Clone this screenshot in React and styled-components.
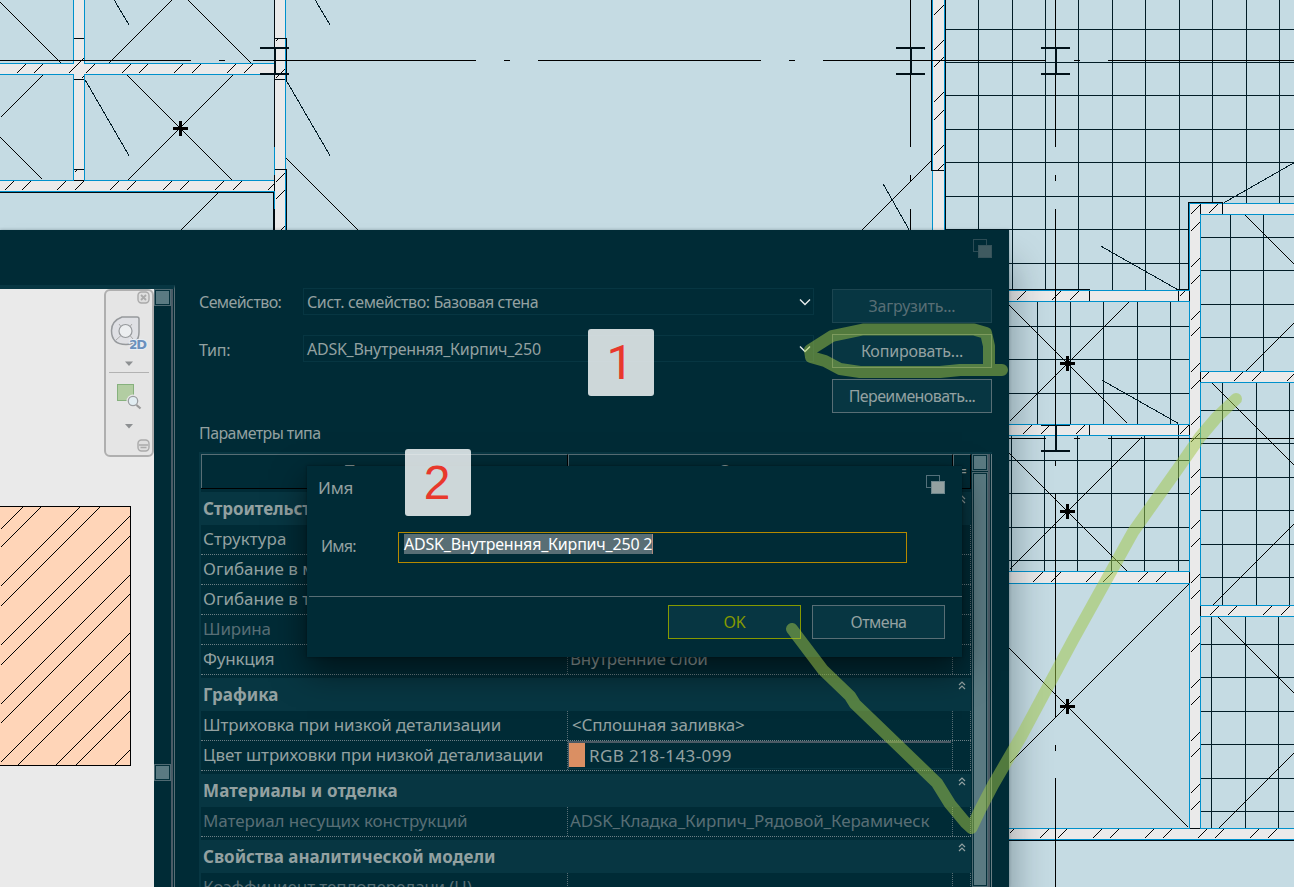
import React from "react";
import styled, { createGlobalStyle } from "styled-components";

const GlobalStyle = createGlobalStyle`
  * { box-sizing: border-box; }
  body { margin: 0; overflow: hidden; }
`;

const c = {
  base: "#002b36",
  panel: "#073642",
  line: "#586e75",
  text: "#93a1a1",
  dim: "#586e75",
  blue: "#0091cc",
  ink: "#021c26",
};

/* ---------- floor plan drawing ---------- */

const hs = (list) => list.map(([y, a, b]) => `M${a} ${y + 0.5}H${b}`).join("");
const vs = (list) => list.map(([x, a, b]) => `M${x + 0.5} ${a}V${b}`).join("");
const ds = (list) => list.map(([a, b, x, y]) => `M${a + 0.5} ${b + 0.5}L${x + 0.5} ${y + 0.5}`).join("");
const fill = (list) => list.map(([x, y, r, b]) => `M${x} ${y}H${r}V${b}H${x}Z`).join("");
const grid = (xs, ys, x1, y1, x2, y2) => vs(xs.map((x) => [x, y1, y2])) + hs(ys.map((y) => [y, x1, x2]));
const rising = (xs, bottom, size = 10) => ds(xs.map((x) => [x, bottom, x + size, bottom - size]));
const risingV = (ys, x) => ds(ys.map((y) => [x, y, x + 10, y - 10]));
const cross = (x, y) => fill([[x - 7, y - 1, x + 8, y + 2], [x - 1, y - 7, x + 2, y + 8]]);
const beam = (x, y) => fill([[x, y, x + 29, y + 2], [x, y + 26, x + 29, y + 28], [x + 14, y + 2, x + 16, y + 26]]);

const walls = fill([
  [74, 0, 84, 180], [0, 64, 275, 74], [275, 0, 285, 230], [0, 181, 275, 191],
  [933, 0, 944, 230], [1190, 204, 1200, 829], [1190, 204, 1294, 214],
  [1009, 291, 1190, 301], [1009, 425, 1190, 435], [1009, 572, 1190, 583],
  [1009, 829, 1294, 839], [1200, 372, 1294, 382], [1200, 606, 1294, 616],
]);

const wallEdges =
  hs([
    [63, 0, 74], [63, 84, 274], [74, 0, 74], [74, 84, 274], [180, 0, 274], [191, 0, 274],
    [203, 1189, 1294], [214, 1200, 1294], [290, 1009, 1189], [301, 1009, 1189],
    [424, 1009, 1189], [435, 1009, 1189], [571, 1009, 1189], [583, 1009, 1189],
    [828, 1009, 1189], [828, 1200, 1294], [839, 1009, 1294],
    [371, 1200, 1294], [382, 1200, 1294], [605, 1200, 1294], [616, 1200, 1294],
  ]) +
  vs([
    [73, 0, 64], [84, 0, 64], [73, 74, 181], [84, 74, 181], [285, 0, 230], [274, 147, 175], [274, 191, 209],
    [932, 0, 230], [944, 0, 230], [1189, 203, 829], [1200, 214, 372], [1200, 382, 606], [1200, 616, 829],
  ]);

const outlines =
  hs([
    [38, 74, 84], [79, 74, 84], [169, 74, 84], [180, 74, 84], [38, 275, 287], [79, 275, 285], [169, 275, 287],
    [192, 0, 274], [170, 931, 944], [202, 1188, 1223], [289, 1009, 1090], [289, 1176, 1189],
    [840, 1009, 1294], [828, 1190, 1200],
  ]) +
  vs([
    [274, 0, 147], [274, 175, 191], [273, 192, 230], [274, 209, 230], [286, 38, 82], [286, 169, 230],
    [931, 0, 171], [945, 0, 230], [1188, 202, 290], [1222, 203, 214], [1200, 204, 214],
    [1089, 291, 301], [1178, 291, 301], [1089, 425, 435], [1178, 425, 435],
    [1189, 291, 301], [1189, 425, 435], [1189, 572, 583], [1200, 372, 382], [1200, 606, 616],
  ]);

const hatch =
  rising([16, 33, 121, 138, 173, 191, 226, 243, 85], 73, 9) +
  ds([[68, 73, 83, 58], [81, 78, 84, 75]]) +
  rising([4, 21, 56, 74, 109, 126, 162, 179, 214, 232], 190, 9) +
  ds([[267, 190, 274, 183], [74, 172, 76, 170], [275, 41, 277, 39], [280, 73, 284, 69], [275, 78, 279, 74], [280, 230, 285, 225]]) +
  ds([[275, 182, 284, 173], [275, 199, 284, 190], [937, 170, 943, 164]]) +
  risingV([15, 50, 67, 102, 120, 155], 933) +
  ds([214, 231, 267, 284, 320, 336, 372, 389, 425, 442, 478, 495, 529, 547, 583, 599, 635, 652, 688, 705, 741, 757, 793, 810]
    .map((y) => [1190, y, 1199, y - 9])) +
  rising([1208], 213, 9) + rising([1016, 1051, 1069], 300, 9) + ds([[1179, 296, 1184, 291]]) +
  rising([1022, 1040, 1075, 1179], 434, 9) + rising([1032, 1050, 1085, 1102, 1137, 1155], 582) +
  rising([1039, 1057, 1092, 1109, 1144, 1162, 1197, 1214, 1249, 1267], 838, 9) + ds([[1009, 833, 1013, 829]]) +
  ds([[1201, 379, 1208, 372]]) + rising([1233, 1251, 1286], 381, 9) + rising([1209, 1227, 1262, 1280], 615, 9);

const tiles =
  grid([978, 1012, 1045, 1078, 1112, 1145, 1179], [229], 945, 0, 1188, 230) +
  grid([1212, 1246, 1279], [29, 62, 95, 129, 162, 196], 945, 0, 1294, 203) +
  grid([1012, 1045, 1078, 1112, 1145, 1179], [263], 1009, 230, 1188, 290) +
  grid([1037, 1070, 1103, 1137, 1170], [326, 359, 393], 1009, 302, 1189, 424) +
  grid([1011, 1044, 1077, 1111, 1144, 1178], [460, 493, 527, 560], 1009, 436, 1189, 571) +
  grid([1230, 1263], [237, 270, 304, 337], 1201, 215, 1294, 371) +
  grid([1222, 1256, 1289], [410, 443, 477, 510, 544, 577], 1201, 383, 1294, 605) +
  grid([1211, 1245, 1278], [644, 677, 711, 744, 778, 811], 1201, 617, 1294, 828);

const axes =
  hs([
    [60, 0, 191], [60, 219, 225], [60, 253, 476], [60, 504, 510], [60, 538, 761], [60, 789, 795],
    [60, 823, 1046], [60, 1074, 1080], [60, 1108, 1294], [438, 1009, 1046], [438, 1074, 1080], [438, 1108, 1294],
  ]) +
  vs([
    [910, 0, 147], [910, 175, 181], [910, 209, 230], [1055, 0, 147], [1055, 175, 181], [1055, 209, 432],
    [1055, 461, 466], [1055, 494, 718], [1055, 745, 751], [1055, 778, 887],
  ]);

const diagonals = ds([
  [0, 2, 61, 63], [171, 0, 108, 63], [188, 0, 251, 63], [0, 117, 42, 75], [0, 137, 42, 179],
  [127, 75, 232, 180], [232, 75, 127, 180], [286, 158, 358, 230], [218, 192, 180, 230], [932, 159, 861, 230],
  [1009, 305, 1127, 423], [1128, 302, 1009, 421], [1009, 453, 1127, 571], [1141, 437, 1009, 569],
  [1188, 584, 1009, 763], [1009, 648, 1188, 827], [1245, 215, 1294, 264], [1245, 371, 1294, 322],
  [1212, 383, 1294, 465], [1212, 605, 1294, 523], [1218, 617, 1294, 693], [1218, 828, 1294, 752],
]);

const swings = ds([
  [114, 0, 129, 25], [315, 0, 330, 25], [85, 80, 129, 156], [287, 82, 330, 156], [883, 184, 909, 230],
  [1224, 202, 1294, 162], [1101, 246, 1177, 289], [1102, 380, 1178, 423],
]);

const PlanSvg = styled.svg`
  position: absolute;
  inset: 0;
  display: block;
  shape-rendering: crispEdges;
`;

const Plan = () => (
  <PlanSvg width="1294" height="887" fill="none">
    <path d={tiles} stroke={c.ink} />
    <path d={walls} fill="#eaeaea" />
    <path d={diagonals} stroke="#000" />
    <path d={swings} stroke={c.ink} />
    <path d={hatch} stroke="#000" />
    <path d={wallEdges} stroke={c.blue} />
    <path d={outlines} stroke="#000a10" />
    <path d={axes} stroke="#000" />
    <path d={beam(260, 47) + beam(896, 47) + beam(1041, 47)} fill="#001018" />
    <path d={fill([[1041, 425, 1070, 426], [1041, 450, 1070, 452], [1055, 426, 1057, 450]])} fill="#001018" />
    <path d={cross(180, 128) + cross(1067, 363) + cross(1067, 511) + cross(1067, 706)} fill="#000" />
  </PlanSvg>
);

/* ---------- windows ---------- */

const Screen = styled.div`
  position: relative;
  width: 1294px;
  height: 887px;
  overflow: hidden;
  background: #c5dbe3;
  font-family: "Noto Sans", "Open Sans", sans-serif;
  color: ${c.text};
`;

const Window = styled.section`
  position: absolute;
  left: 0;
  top: 230px;
  width: 1009px;
  height: 657px;
  display: flex;
  flex-direction: column;
  background: ${c.base};
  box-shadow: 4px 34px 34px rgba(0, 20, 30, 0.34), 0 0 3px rgba(0, 20, 30, 0.3);
`;

const TitleBar = styled.header`
  height: ${(p) => p.$h}px;
  flex: none;
  display: flex;
  justify-content: ${(p) => (p.$end ? "flex-end" : "space-between")};
  padding: ${(p) => p.$pad};
  font-size: 17px;
  line-height: 26px;
  letter-spacing: -0.2px;
`;

const WindowIcon = ({ dim }) => (
  <svg width="19" height="19" shapeRendering="crispEdges" fill="none">
    <rect x="0.5" y="0.5" width="13" height="12" stroke={dim ? "#2c4c55" : "#54707a"} />
    <rect x="5.5" y="6.5" width="13" height="12" fill={dim ? "#3f5a60" : "#93a1a1"} stroke={dim ? "#365259" : "#6d868c"} />
  </svg>
);

const Body = styled.div`
  flex: 1;
  min-height: 0;
  display: flex;
`;

const Preview = styled.aside`
  width: 175px;
  flex: none;
  display: flex;
  border-top: 4px solid ${c.panel};
  border-right: 1px solid ${c.line};
`;

const Sheet = styled.div`
  width: 154px;
  flex: none;
  display: flex;
  flex-direction: column;
  background: #eaeaea;
`;

const Sample = styled.svg`
  display: block;
  margin-top: 49px;
  shape-rendering: crispEdges;
`;

const NavBar = styled.div`
  align-self: flex-end;
  width: 50px;
  height: 168px;
  flex: none;
  border: 2px solid #afafaf;
  border-radius: 6px;
  background: #e5e5e5;
  svg { display: block; margin: -2px; }
`;

const PreviewScroll = styled.div`
  width: 18px;
  display: flex;
  flex-direction: column;
  justify-content: space-between;
  height: 492px;
`;

const Double = styled.div`
  width: 2px;
  background: #4a5b66;
  margin-right: 1px;
`;

const Stub = styled.div`
  width: ${(p) => p.$w || 17}px;
  height: 17px;
  flex: ${(p) => (p.$grow ? 1 : "none")};
  border: 1px solid #4f6a72;
  background: #5a7a82;
  box-shadow: inset 0 0 0 1px #05303b;
`;

const Form = styled.div`
  flex: 1;
  padding-left: 24px;
  display: flex;
  flex-direction: column;
`;

const FormTop = styled.div`
  display: flex;
  height: 120px;
  flex: none;
`;

const Fields = styled.div`
  display: flex;
  flex-direction: column;
  gap: 20px;
  padding-top: 3px;
`;

const Field = styled.div`
  display: flex;
  height: 27px;
  align-items: center;
  font-size: 16px;
`;

const FieldLabel = styled.span`
  width: 104px;
  letter-spacing: ${(p) => p.$ls || "-0.3px"};
  padding-top: ${(p) => p.$drop || 0}px;
`;

const Combo = styled.div`
  width: 511px;
  height: 27px;
  padding: 0 2px 0 3px;
  display: flex;
  align-items: center;
  justify-content: space-between;
  border: 1px solid ${c.panel};
  letter-spacing: ${(p) => p.$ls};
  line-height: 24px;
`;

const Buttons = styled.div`
  margin-left: 18px;
  padding-top: 4px;
  display: flex;
  flex-direction: column;
  gap: 11px;
`;

const Button = styled.button`
  width: ${(p) => p.$w}px;
  height: 34px;
  flex: none;
  padding: 0;
  border: 1px solid ${(p) => (p.$tone === "off" ? "#1c4550" : p.$tone === "ok" ? "#859900" : c.line)};
  background: ${c.panel};
  color: ${(p) => (p.$tone === "off" ? c.dim : p.$tone === "ok" ? "#859900" : c.text)};
  font: 16px "Noto Sans", "Open Sans", sans-serif;
  letter-spacing: ${(p) => p.$ls || "-0.2px"};
`;

const SectionLabel = styled.div`
  height: 47px;
  flex: none;
  padding-top: 16px;
  font-size: 16px;
  line-height: 24px;
  letter-spacing: -0.58px;
`;

const Chevron = () => (
  <svg width="12" height="8" fill="none" stroke="#e6ecec" strokeWidth="1.4"><path d="M1 1.5L6 6.5L11 1.5" /></svg>
);

/* ---------- parameter table ---------- */

const TableFrame = styled.div`
  display: flex;
  width: 793px;
  height: 435px;
  overflow: hidden;
  border-left: 2px solid ${c.panel};
  border-top: 2px solid ${c.panel};
`;

const Table = styled.div`
  width: 771px;
  flex: none;
  padding-right: 1px;
`;

const HeaderRow = styled.div`
  display: grid;
  grid-template-columns: 367px 385px 18px;
  height: 35px;
  margin-bottom: 3px;
  border-bottom: 1px solid #000;
`;

const HeaderCell = styled.div`
  border-left: 1px solid ${c.line};
  border-top: 1px solid ${c.line};
  border-right: 1px solid #000;
  text-align: center;
  font-size: 17px;
  line-height: 31px;
`;

const Group = styled.div`
  height: 33px;
  margin-top: ${(p) => (p.$first ? 0 : 3)}px;
  padding: 0 4px 0 2px;
  display: flex;
  justify-content: space-between;
  background: ${c.panel};
  font-size: 17px;
  font-weight: 700;
  line-height: 34px;
  letter-spacing: ${(p) => p.$ls};
  svg { margin-top: 2px; }
`;

const Row = styled.div`
  display: grid;
  grid-template-columns: 367px 385px 18px;
  height: 30px;
  border-bottom: 1px dotted #6b7f85;
  font-size: 17px;
  line-height: 28px;
  color: ${(p) => (p.$dim ? c.dim : c.text)};
`;

const Cell = styled.div`
  padding-left: ${(p) => p.$pad ?? 2}px;
  border-right: 1px dotted ${c.line};
  white-space: nowrap;
  overflow: hidden;
  display: flex;
  letter-spacing: ${(p) => p.$ls || 0};
`;

const ColorBox = styled.div`
  display: flex;
  gap: 4px;
  width: 383px;
  height: 28px;
  border-top: 2px solid #4a5964;
  border-left: 1px solid #4a5964;
  border-bottom: 1px solid ${c.panel};
  line-height: 25px;
  &::before { content: ""; width: 16px; height: 24px; background: #da8f63; }
`;

const TableScroll = styled.div`
  width: 16px;
  flex: none;
  display: flex;
  flex-direction: column;
  gap: 1px;
`;

const TableEdge = styled.div`
  width: 4px;
  border-left: 2px solid #4a5964;
  border-right: 1px solid #6b7f85;
`;

const Collapse = () => (
  <svg width="10" height="11" fill="none" stroke={c.text} strokeWidth="1.2"><path d="M2 5L5 2L8 5M2 9L5 6L8 9" /></svg>
);

const groups = [
  { name: "Строительство", ls: "-0.1px", rows: [
    { label: "Структура", ls: "0.1px" },
    { label: "Огибание в местах вставки" },
    { label: "Огибание в торцах стен" },
    { label: "Ширина", dim: true, ls: "-0.2px" },
    { label: "Функция", value: "Внутренние слои", ls: "-0.2px", vls: "-0.3px" },
  ] },
  { name: "Графика", rows: [
    { label: "Штриховка при низкой детализации", value: "<Сплошная заливка>", ls: "-0.13px", vls: "-0.2px", pad: 4 },
    { label: "Цвет штриховки при низкой детализации", value: "RGB 218-143-099", ls: "-0.13px", vls: "0.4px", pad: 0, swatch: true },
  ] },
  { name: "Материалы и отделка", ls: "0.15px", rows: [
    { label: "Материал несущих конструкций", value: "ADSK_Кладка_Кирпич_Рядовой_Керамическ", dim: true, ls: "-0.08px", vls: "-0.14px" },
  ] },
  { name: "Свойства аналитической модели", rows: [
    { label: "Коэффициент теплопередачи (U)", dim: true, ls: "-0.1px" },
  ] },
];

const ParameterTable = () => (
  <TableFrame>
    <Table>
      <HeaderRow>
        <HeaderCell>Параметр</HeaderCell>
        <HeaderCell>Значение</HeaderCell>
        <HeaderCell>=</HeaderCell>
      </HeaderRow>
      {groups.map((group, i) => (
        <React.Fragment key={group.name}>
          <Group $first={i === 0} $ls={group.ls || "0"}>{group.name}<Collapse /></Group>
          {group.rows.map((row) => (
            <Row key={row.label} $dim={row.dim}>
              <Cell $ls={row.ls}>{row.label}</Cell>
              <Cell $pad={row.pad ?? 2} $ls={row.vls}>
                {row.swatch ? <ColorBox>{row.value}</ColorBox> : row.value}
              </Cell>
              <Cell />
            </Row>
          ))}
        </React.Fragment>
      ))}
    </Table>
    <TableScroll>
      <Stub $w={16} />
      <Stub $w={16} $grow />
    </TableScroll>
    <TableEdge />
  </TableFrame>
);

/* ---------- name prompt ---------- */

const Prompt = styled.section`
  position: absolute;
  left: 307px;
  top: 466px;
  width: 655px;
  height: 191px;
  display: flex;
  flex-direction: column;
  background: ${c.base};
  box-shadow: 0 14px 32px rgba(0, 0, 0, 0.55), 0 0 3px rgba(0, 0, 0, 0.4);
`;

const PromptBody = styled.div`
  height: 86px;
  flex: none;
  padding: 22px 0 0 14px;
  display: flex;
  font-size: 16px;
`;

const PromptLabel = styled.label`
  width: 77px;
  padding-top: 3px;
  letter-spacing: -0.8px;
`;

const Input = styled.div`
  width: 509px;
  height: 31px;
  padding: 1px 0 0 5px;
  border: 1px solid #b58900;
  color: #fff;
  line-height: 20px;
  span {
    display: inline-block;
    height: 20px;
    background: ${c.line};
    border-right: 1px solid #b08a80;
    letter-spacing: -0.2px;
    white-space: nowrap;
  }
`;

const PromptActions = styled.footer`
  margin-left: 2px;
  border-top: 1px solid ${c.line};
  padding: 8px 17px 0 0;
  display: flex;
  justify-content: flex-end;
  gap: 11px;
`;

const Badge = styled.div`
  position: absolute;
  left: ${(p) => p.$x}px;
  top: ${(p) => p.$y}px;
  width: 66px;
  height: 67px;
  border-radius: 3px;
  background: rgba(239, 243, 244, 0.86);
  color: #e8382c;
  font-family: ${(p) => p.$font || '"Liberation Sans"'}, sans-serif;
  font-size: 48px;
  line-height: 67px;
  text-align: center;
  padding-right: 2px;
`;

const Marker = styled.svg`
  position: absolute;
  inset: 0;
`;

const sampleLines = [529, 547, 586, 606, 645, 665, 704, 723, 762, 782, 820, 840, 879]
  .map((k) => k - 506)
  .map((k) => (k <= 259 ? `M0.5 ${k + 0.5}L${k + 0.5} 0.5` : `M${k - 259 + 0.5} 259.5L${k + 0.5} 0.5`))
  .join("");

const NavIcons = () => (
  <svg width="50" height="168" fill="none">
    <rect x="34" y="3" width="11" height="11" rx="3.5" fill="#dedede" stroke="#aaa" strokeWidth="1.4" />
    <path d="M37 6L42 11M42 6L37 11" stroke="#aaa" strokeWidth="1.8" />
    <path d="M18 28H33Q35 28 35 30V43Q35 55.5 22 55.5Q7.500 55.5 7.500 41.500Q7.500 32 18 28Z" fill="#dfe0e4" stroke="#96999c" strokeWidth="1.5" />
    <circle cx="21.500" cy="42" r="6.500" fill="#eceef0" stroke="#96999c" strokeWidth="1.200" />
    <path d="M12 51L17 46.500M26 46.500L29 50M17 37.500L15 35M26 37.500L28 35" stroke="#aaa" />
    <text x="25" y="60" fill="#6a90bd" stroke="#e8edf3" strokeWidth="2" paintOrder="stroke" fontFamily="DejaVu Sans, sans-serif" fontWeight="700" fontSize="13" textLength="18">2D</text>
    <path d="M21 72.500H29L25 77Z" fill="#8d9092" />
    <path d="M5 83.500H45" stroke="#b2b2b2" />
    <rect x="13.500" y="95.500" width="16" height="16" fill="#b2cda2" stroke="#86b17d" />
    <circle cx="29" cy="112" r="6.500" fill="#e8e8e8" />
    <path d="M32.500 116L36.500 119.500" stroke="#999" strokeWidth="2.200" />
    <circle cx="29" cy="112" r="4.700" fill="#e2edf2" stroke="#9a9da0" strokeWidth="1.300" />
    <path d="M21 135H29L25 139.500Z" fill="#8d9092" />
    <rect x="34" y="151" width="11" height="11" rx="3.500" fill="#dedede" stroke="#aaa" strokeWidth="1.400" />
    <path d="M35 156H44M36.500 158.500H42.500" stroke="#aaa" strokeWidth="1.400" />
  </svg>
);

export default function App() {
  return (
    <Screen>
      <GlobalStyle />
      <Plan />
      <Window>
        <TitleBar $h={55} $pad="9px 17px 0 0" $end><WindowIcon dim /></TitleBar>
        <Body>
          <Preview>
            <Sheet>
              <NavBar><NavIcons /></NavBar>
              <Sample width="131" height="260" fill="none">
                <rect width="131" height="260" fill="#ffd5b8" />
                <path d={sampleLines} stroke="#000" />
                <path d="M0 0.5H130.500V259.500H0" stroke="#000" />
              </Sample>
            </Sheet>
            <PreviewScroll><Stub /><Stub /></PreviewScroll>
            <Double />
          </Preview>
          <Form>
            <FormTop>
              <Fields>
                <Field><FieldLabel $ls="-0.6px">Семейство:</FieldLabel><Combo $ls="-0.4px">Сист. семейство: Базовая стена<Chevron /></Combo></Field>
                <Field><FieldLabel $drop={2}>Тип:</FieldLabel><Combo $ls="-0.26px">ADSK_Внутренняя_Кирпич_250<Chevron /></Combo></Field>
              </Fields>
              <Buttons>
                <Button $w={160} $tone="off">Загрузить...</Button>
                <Button $w={160}>Копировать...</Button>
                <Button $w={160} $ls="-0.6px">Переименовать...</Button>
              </Buttons>
            </FormTop>
            <SectionLabel>Параметры типа</SectionLabel>
            <ParameterTable />
          </Form>
        </Body>
      </Window>

      <Prompt>
        <TitleBar $h={44} $pad="9px 17px 0 11px">Имя<WindowIcon /></TitleBar>
        <PromptBody>
          <PromptLabel>Имя:</PromptLabel>
          <Input><span>ADSK_Внутренняя_Кирпич_250 2</span></Input>
        </PromptBody>
        <PromptActions>
          <Button $w={133} $tone="ok">OK</Button>
          <Button $w={133} $ls="-0.6px">Отмена</Button>
        </PromptActions>
      </Prompt>

      <Badge $x={588} $y={329} $font="Roboto">1</Badge>
      <Badge $x={405} $y={449}>2</Badge>

      <Marker width="1294" height="887" fill="none" stroke="rgb(160,198,70)" strokeOpacity="0.51" strokeWidth="12" strokeLinecap="round" strokeLinejoin="round">
        <path d="M1002 370H960L940 372H860L840 369L825 361L811 357L810 350L832 336L863 329.500H974L986 333L989 346V367" />
        <path d="M792 629L823 670L850 696L855 704L880 728L907 754L937 783L950 804L965 822L971.500 828L980 810L993 785L1022 735L1073 640L1133 532L1177 470L1200 437L1217 417L1236 399" />
      </Marker>
    </Screen>
  );
}
